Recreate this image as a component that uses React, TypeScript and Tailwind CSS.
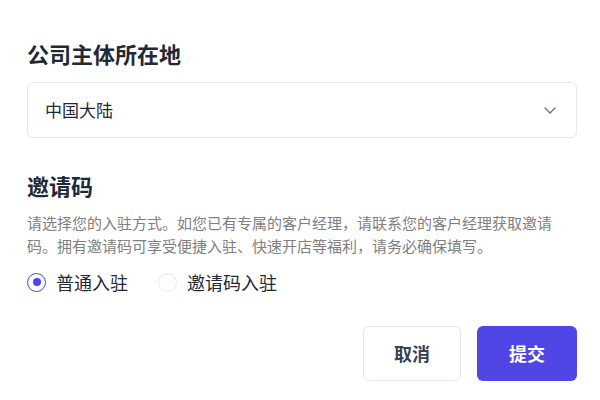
import React, { useState } from 'react';

const font = { fontFamily: '"Noto Sans CJK SC", "Noto Sans", sans-serif' };

const Radio: React.FC<{ checked: boolean; label: string; onClick: () => void }> = ({ checked, label, onClick }) => (
  <button type="button" onClick={onClick} className="flex items-center gap-[10px]">
    <span
      className={`flex h-[19px] w-[19px] items-center justify-center rounded-full border-[1.5px] bg-white ${
        checked ? 'border-[#4f46e5]' : 'border-[#e5e7eb]'
      }`}
    >
      {checked && <span className="h-[8px] w-[8px] rounded-full bg-[#4f46e5]" />}
    </span>
    <span className="text-[18px] leading-[28px] text-[#1f2937]">{label}</span>
  </button>
);

export default function App() {
  const [mode, setMode] = useState<'normal' | 'invite'>('normal');

  return (
    <div className="h-[400px] w-[600px] bg-white" style={font}>
      <div className="w-[550px] pl-[27px] pt-[38px] box-content">
        <h2 className="text-[22px] font-bold leading-[30px] text-[#1f2937]">公司主体所在地</h2>

        <div className="mt-[14px] flex h-[56px] items-center justify-between rounded-md border border-[#e5e7eb] pl-[17px] pr-[20px]">
          <span className="text-[17px] text-[#1f2937]">中国大陆</span>
          <svg width="12" height="7" viewBox="0 0 12 7" fill="none" stroke="#6b7280" strokeWidth="1.4" strokeLinecap="round" strokeLinejoin="round">
            <path d="M1 1l5 5 5-5" />
          </svg>
        </div>

        <h2 className="mt-[32px] text-[22px] font-bold leading-[30px] text-[#1f2937]">邀请码</h2>
        <p className="mt-[12px] text-[15px] leading-[22.5px] text-[#808080]">
          请选择您的入驻方式。如您已有专属的客户经理，请联系您的客户经理获取邀请码。拥有邀请码可享受便捷入驻、快速开店等福利，请务必确保填写。
        </p>

        <div className="mt-[11px] flex items-center gap-[30px]">
          <Radio checked={mode === 'normal'} label="普通入驻" onClick={() => setMode('normal')} />
          <Radio checked={mode === 'invite'} label="邀请码入驻" onClick={() => setMode('invite')} />
        </div>

        <div className="mt-[30px] flex justify-end gap-[16px]">
          <button className="h-[55px] w-[98px] rounded-md border border-[#e5e7eb] bg-white text-[18px] font-bold text-[#374151]">
            取消
          </button>
          <button className="h-[55px] w-[100px] rounded-md bg-[#4f46e5] text-[18px] font-bold text-white">
            提交
          </button>
        </div>
      </div>
    </div>
  );
}
